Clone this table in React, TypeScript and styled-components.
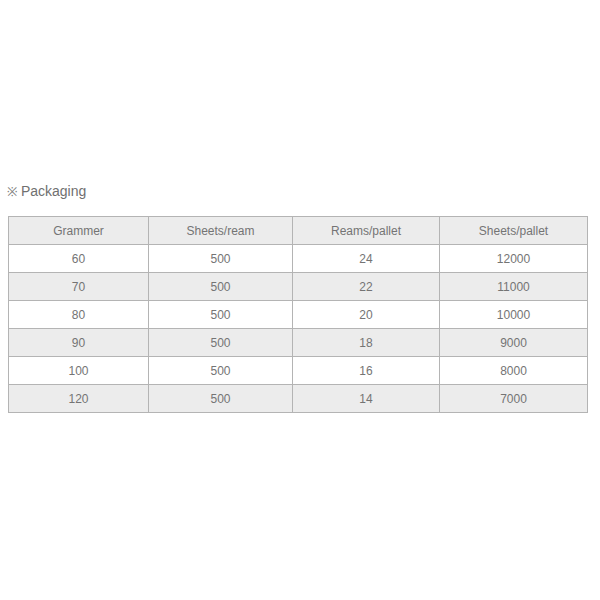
import React from "react";
import styled, { createGlobalStyle } from "styled-components";

const GlobalStyle = createGlobalStyle`
  html, body {
    margin: 0;
    padding: 0;
    background: #ffffff;
  }
  body {
    font-family: "Liberation Sans", Arial, sans-serif;
  }
`;

const rows = [
  ["60", "500", "24", "12000"],
  ["70", "500", "22", "11000"],
  ["80", "500", "20", "10000"],
  ["90", "500", "18", "9000"],
  ["100", "500", "16", "8000"],
  ["120", "500", "14", "7000"],
];

const headers = ["Grammer", "Sheets/ream", "Reams/pallet", "Sheets/pallet"];

const App: React.FC = () => {
  return (
    <Page>
      <GlobalStyle />
      <Title>
        <Mark>※</Mark> Packaging
      </Title>
      <Table>
        <colgroup>
          <col style={{ width: 140 }} />
          <col style={{ width: 144 }} />
          <col style={{ width: 147 }} />
          <col />
        </colgroup>
        <thead>
          <Row shaded>
            {headers.map((h) => (
              <Cell as="th" key={h}>{h}</Cell>
            ))}
          </Row>
        </thead>
        <tbody>
          {rows.map((r, i) => (
            <Row key={r[0]} shaded={i % 2 === 1}>
              {r.map((v, j) => (
                <Cell key={j}>{v}</Cell>
              ))}
            </Row>
          ))}
        </tbody>
      </Table>
    </Page>
  );
};

export default App;

const Page = styled.div`
  padding: 183px 12px 0 8px;
  width: 600px;
  box-sizing: border-box;
`;

const Title = styled.h3`
  margin: 0 0 16px -1px;
  font-size: 14px;
  font-weight: normal;
  line-height: 16px;
  color: #707070;
`;

const Mark = styled.span`
  font-size: 12.5px;
  color: #808080;
`;

const Table = styled.table`
  width: 580px;
  border-collapse: collapse;
  table-layout: fixed;
`;

const Row = styled.tr<{ shaded?: boolean }>`
  background: ${(p) => (p.shaded ? "#ececec" : "#ffffff")};
`;

const Cell = styled.td`
  height: 27px;
  padding: 0;
  border: 1px solid #b4b4b4;
  text-align: center;
  vertical-align: middle;
  font-size: 12px;
  font-weight: normal;
  color: #747474;
`;
